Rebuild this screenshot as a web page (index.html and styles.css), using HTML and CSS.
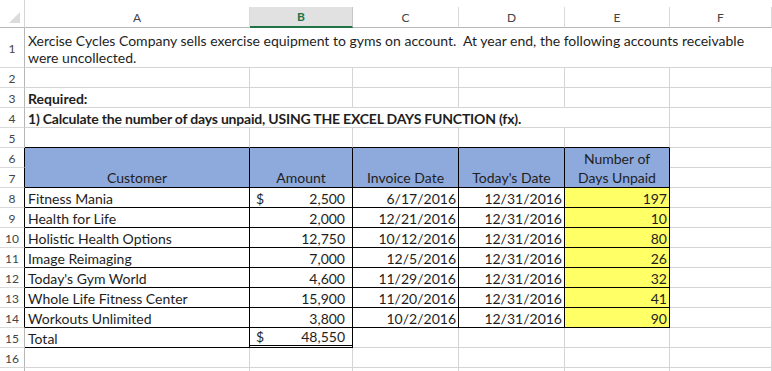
FILE: index.html
```html
<!DOCTYPE html>
<html lang="en">
<head>
    <meta charset="UTF-8">
    <meta name="viewport" content="width=device-width, initial-scale=1.0">
    <title>Xercise Cycles - Days Unpaid</title>
    <link rel="stylesheet" href="styles.css">
</head>
<body>
    <div class="sheet">
        <!-- column headers -->
        <div class="corner"><span class="tri"></span></div>
        <div class="colhead">A</div>
        <div class="colhead selected">B</div>
        <div class="colhead">C</div>
        <div class="colhead">D</div>
        <div class="colhead">E</div>
        <div class="colhead">F</div>

        <!-- row 1 -->
        <div class="rh">1</div>
        <div class="cell intro">Xercise Cycles Company sells exercise equipment to gyms on account.&nbsp; At year end, the following accounts receivable were uncollected.</div>

        <!-- row 2 -->
        <div class="rh">2</div>
        <div class="cell"></div><div class="cell"></div><div class="cell"></div><div class="cell"></div><div class="cell"></div><div class="cell"></div>

        <!-- row 3 -->
        <div class="rh">3</div>
        <div class="cell bold">Required:</div><div class="cell"></div><div class="cell"></div><div class="cell"></div><div class="cell"></div><div class="cell"></div>

        <!-- row 4 -->
        <div class="rh">4</div>
        <div class="cell bold tight span5">1) Calculate the number of days unpaid, USING THE EXCEL DAYS FUNCTION (fx).</div>
        <div class="cell"></div>

        <!-- row 5 -->
        <div class="rh">5</div>
        <div class="cell edge"></div><div class="cell edge"></div><div class="cell edge"></div><div class="cell edge"></div><div class="cell edge"></div><div class="cell"></div>

        <!-- rows 6-7 table header -->
        <div class="rh tbl-left">6</div>
        <div class="cell tb hd tall">Customer</div>
        <div class="cell tb hd tall">Amount</div>
        <div class="cell tb hd tall">Invoice Date</div>
        <div class="cell tb hd tall">Today's Date</div>
        <div class="cell tb hd tall">Number of<br>Days Unpaid</div>
        <div class="cell"></div>
        <div class="rh tbl-left">7</div>
        <div class="cell"></div>

        <!-- data -->
        <div class="rh tbl-left">8</div>
        <div class="cell tb">Fitness Mania</div>
        <div class="cell tb money"><span>$</span><span>2,500</span></div>
        <div class="cell tb num">6/17/2016</div>
        <div class="cell tb num">12/31/2016</div>
        <div class="cell tb num days">197</div>
        <div class="cell"></div>

        <div class="rh tbl-left">9</div>
        <div class="cell tb">Health for Life</div>
        <div class="cell tb money"><span></span><span>2,000</span></div>
        <div class="cell tb num">12/21/2016</div>
        <div class="cell tb num">12/31/2016</div>
        <div class="cell tb num days">10</div>
        <div class="cell"></div>

        <div class="rh tbl-left">10</div>
        <div class="cell tb">Holistic Health Options</div>
        <div class="cell tb money"><span></span><span>12,750</span></div>
        <div class="cell tb num">10/12/2016</div>
        <div class="cell tb num">12/31/2016</div>
        <div class="cell tb num days">80</div>
        <div class="cell"></div>

        <div class="rh tbl-left">11</div>
        <div class="cell tb">Image Reimaging</div>
        <div class="cell tb money"><span></span><span>7,000</span></div>
        <div class="cell tb num">12/5/2016</div>
        <div class="cell tb num">12/31/2016</div>
        <div class="cell tb num days">26</div>
        <div class="cell"></div>

        <div class="rh tbl-left">12</div>
        <div class="cell tb">Today's Gym World</div>
        <div class="cell tb money"><span></span><span>4,600</span></div>
        <div class="cell tb num">11/29/2016</div>
        <div class="cell tb num">12/31/2016</div>
        <div class="cell tb num days">32</div>
        <div class="cell"></div>

        <div class="rh tbl-left">13</div>
        <div class="cell tb">Whole Life Fitness Center</div>
        <div class="cell tb money"><span></span><span>15,900</span></div>
        <div class="cell tb num">11/20/2016</div>
        <div class="cell tb num">12/31/2016</div>
        <div class="cell tb num days">41</div>
        <div class="cell"></div>

        <div class="rh tbl-left">14</div>
        <div class="cell tb">Workouts Unlimited</div>
        <div class="cell tb money"><span></span><span>3,800</span></div>
        <div class="cell tb num">10/2/2016</div>
        <div class="cell tb num">12/31/2016</div>
        <div class="cell tb num days">90</div>
        <div class="cell"></div>

        <!-- total -->
        <div class="rh">15</div>
        <div class="cell total-label">Total</div>
        <div class="cell money total"><span>$</span><span>48,550</span></div>
        <div class="cell"></div><div class="cell"></div><div class="cell"></div><div class="cell"></div>

        <div class="rh">16</div>
        <div class="cell"></div><div class="cell"></div><div class="cell"></div><div class="cell"></div><div class="cell"></div><div class="cell"></div>

        <!-- row 17 only peeks in at the bottom edge -->
        <div class="rh"></div>
        <div class="cell"></div><div class="cell"></div><div class="cell"></div><div class="cell"></div><div class="cell"></div><div class="cell"></div>
    </div>
</body>
</html>
```

FILE: styles.css
```css
body {
    margin: 0;
    padding: 0;
    background: #ffffff;
    font-family: Lato, 'Liberation Sans', sans-serif;
    font-size: 14px;
    color: #1e1e1e;
    height: 371px;
    overflow: hidden;
}

.sheet {
    display: grid;
    grid-template-columns: 25px 225px 103px 106px 106px 105px 1fr;
    grid-template-rows: 28px 40px repeat(16, 20px);
}

/* Headers */
.corner {
    position: relative;
    border-bottom: 1px solid #b7b7b7;
    border-right: 1px solid #d4d4d4;
    box-sizing: border-box;
}

.tri {
    position: absolute;
    right: 4px;
    bottom: 4px;
    width: 0;
    height: 0;
    border-left: 11px solid transparent;
    border-bottom: 11px solid #dcdcdc;
}

.colhead {
    margin-top: 7px;
    display: flex;
    align-items: center;
    justify-content: center;
    font-size: 12px;
    color: #444;
    border-right: 1px solid #d9d9d9;
    border-bottom: 1px solid #b7b7b7;
    box-sizing: border-box;
}

.colhead.selected {
    background: #e1e1e1;
    color: #217346;
    font-weight: bold;
    border-bottom: 2px solid #217346;
    border-right-color: #c6c6c6;
}

.rh {
    display: flex;
    align-items: center;
    justify-content: center;
    padding-top: 2px;
    font-size: 12px;
    color: #444;
    border-right: 1px solid #b7b7b7;
    border-bottom: 1px solid #d9d9d9;
    box-sizing: border-box;
}

/* Cells */
.cell {
    display: flex;
    align-items: flex-end;
    padding: 0 3px;
    line-height: 16px;
    white-space: nowrap;
    border-right: 1px solid #d4d4d4;
    border-bottom: 1px solid #d4d4d4;
    box-sizing: border-box;
    min-width: 0;
}

.intro {
    grid-column: span 6;
    white-space: normal;
    line-height: 17px;
    padding-bottom: 1px;
    border-right: none;
}

.bold {
    font-weight: bold;
}

.tight {
    letter-spacing: -0.2px;
}

.span5 {
    grid-column: span 5;
}

.edge {
    border-bottom-color: #000;
}

/* Receivables table */
.tb {
    border-right-color: #000;
    border-bottom-color: #000;
}

.tbl-left {
    border-right-color: #000;
}

.hd {
    background: #8ea9db;
    justify-content: center;
    text-align: center;
    line-height: 19px;
}

.tall {
    grid-row: span 2;
}

.num {
    justify-content: flex-end;
    padding-right: 2px;
}

.money {
    justify-content: space-between;
    padding-left: 6px;
    padding-right: 7px;
}

.days {
    background: #ffff66;
}

.total-label {
    border-right-color: #000;
    border-bottom-color: #000;
}

.total {
    border-right-color: #000;
    border-bottom: 3px double #000;
}
```
